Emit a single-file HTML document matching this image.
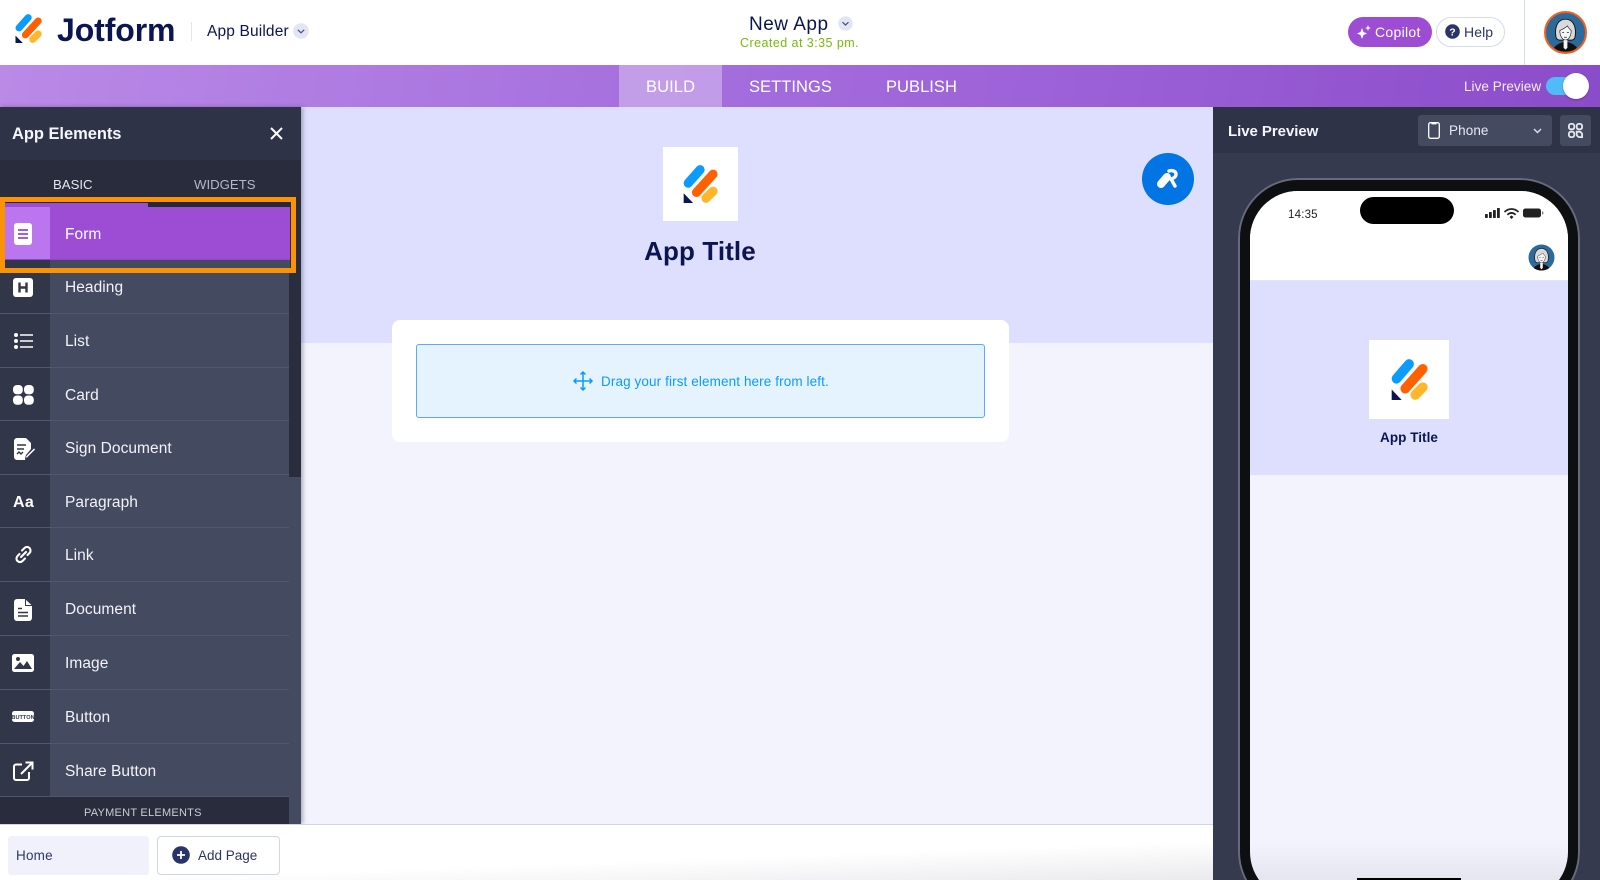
<!DOCTYPE html>
<html><head><meta charset="utf-8"><title>Jotform App Builder</title>
<style>
*{box-sizing:border-box}
html,body{margin:0;padding:0;width:1600px;height:880px;overflow:hidden;background:#fff;font-family:"Liberation Sans",sans-serif}
#w{position:relative;width:1600px;height:880px;overflow:hidden}
.a{position:absolute}
.t{position:absolute;white-space:nowrap;line-height:1}
svg{position:absolute;overflow:visible}
.row{position:absolute;left:0;width:289px;height:54px;background:#444a60;border-bottom:1.5px solid #51576f}
.row .ic{position:absolute;left:0;top:0;width:50px;height:100%;background:#323649}
.row .lb{position:absolute;left:65px;top:19px;font-size:15.5px;line-height:1;color:#f2f3f8;letter-spacing:.06px;white-space:nowrap}
.row svg{left:11px;top:12px}
</style></head><body><div id="w">
<svg width="0" height="0" style="position:absolute"><defs>
<symbol id="jl" viewBox="15 14 27 29" preserveAspectRatio="none">
<path d="M19 27.900 28.200 17.600" stroke="#0a9bff" stroke-width="7" stroke-linecap="round" fill="none"/>
<path d="M25.400 34.900 38.200 21" stroke="#ff6100" stroke-width="7" stroke-linecap="round" fill="none"/>
<path d="M32.700 39.400 38.200 34" stroke="#ffb629" stroke-width="7" stroke-linecap="round" fill="none"/>
<path d="M15.500 35.600 22.800 43H15.500z" fill="#0a1551"/>
</symbol>
<symbol id="av" viewBox="0 0 40 40">
<circle cx="20" cy="20" r="20" fill="#2c6a9c"/>
<path d="M10 25C8 14 12 6 20 6s12 8 10 19c-1 3-3 3-4 3H14c-1 0-3 0-4-3z" fill="#d9d9d9" stroke="#111" stroke-width="1"/>
<path d="M14 18c2-1 6-3 8-5 1 2 3 4 4 5 0 6-3 10-6 10s-6-4-6-10z" fill="#f4f4f4" stroke="#222" stroke-width=".7"/>
<path d="M16.500 20h2M21.500 20h2M18.500 25h3" stroke="#222" stroke-width=".8"/>
<path d="M8 36c3-4 7-5 10-6h4c3 1 7 2 10 6-3 3-8 4-12 4s-9-1-12-4z" fill="#111"/>
<path d="M18 28h4v8l-2 2-2-2z" fill="#f4f4f4"/>
</symbol>
</defs></svg>

<!-- top header -->
<div class="a" style="left:0;top:0;width:1600px;height:65px;background:#fff"></div>
<svg style="left:15px;top:14px" width="27" height="29"><use href="#jl" width="27" height="29"/></svg>
<div class="t" style="left:57px;top:14px;font-size:32px;font-weight:700;color:#0a1551;letter-spacing:-.1px">Jotform</div>
<div class="a" style="left:190.500px;top:22px;width:1px;height:19px;background:#e3e5f2"></div>
<div class="t" style="left:207px;top:24px;font-size:15.500px;color:#0a1551;letter-spacing:.15px">App Builder</div>
<svg style="left:293px;top:23px" width="16" height="16"><circle cx="8" cy="8" r="7.800" fill="#e3e5f5"/><path d="M4.800 6.800 8 9.800l3.200-3" fill="none" stroke="#46507d" stroke-width="1.200"/></svg>
<div class="t" style="left:749px;top:15px;font-size:19px;color:#0a1551;letter-spacing:.5px">New App</div>
<svg style="left:838px;top:16px" width="15" height="15"><circle cx="7.500" cy="7.500" r="7.300" fill="#e3e5f5"/><path d="M4.500 6.200 7.500 9l3-2.800" fill="none" stroke="#46507d" stroke-width="1.200"/></svg>
<div class="t" style="left:740px;top:37px;font-size:12.500px;color:#78bb07;letter-spacing:.45px">Created at 3:35 pm.</div>

<div class="a" style="left:1348px;top:17px;width:84px;height:30px;border-radius:15px;background:#9c4dd3"></div>
<svg style="left:1356px;top:25px" width="15" height="15" viewBox="0 0 15 15" fill="#fff"><path d="M6 3 7.500 7 11 8.500 7.500 10 6 14 4.500 10 1 8.500 4.500 7z"/><path d="M12 0 12.800 2.200 15 3l-2.200.8L12 6l-.8-2.200L9 3l2.200-.8z"/></svg>
<div class="t" style="left:1375px;top:25px;font-size:14px;color:#fff;letter-spacing:.3px">Copilot</div>
<div class="a" style="left:1436px;top:17px;width:69px;height:30px;border-radius:15px;background:#fff;border:1px solid #d6d9f2"></div>
<svg style="left:1445px;top:24px" width="15" height="15"><circle cx="7.500" cy="7.500" r="7.300" fill="#2b3467"/><text x="7.500" y="11.300" font-family="Liberation Sans" font-size="10.500" font-weight="700" text-anchor="middle" fill="#fff">?</text></svg>
<div class="t" style="left:1464px;top:25px;font-size:14px;color:#2b3467;letter-spacing:.1px">Help</div>
<div class="a" style="left:1524px;top:0;width:1px;height:65px;background:#d9dcf3"></div>
<svg style="left:1544px;top:11px" width="43" height="43" viewBox="0 0 43 43"><circle cx="21.500" cy="21.500" r="20.500" fill="#2c6a9c" stroke="#f2601c" stroke-width="2"/><use href="#av" x="2.500" y="2.500" width="38" height="38"/></svg>

<!-- purple bar -->
<div class="a" style="left:0;top:65px;width:1600px;height:42px;background:linear-gradient(100deg,#b98ae6 0%,#a873df 35%,#9a5fd6 70%,#8b4cc9 100%)"></div>
<div class="a" style="left:619px;top:65px;width:103px;height:42px;background:rgba(255,255,255,.32)"></div>
<div class="t" style="left:646px;top:79px;font-size:16.500px;color:#fff;letter-spacing:.1px">BUILD</div>
<div class="t" style="left:749px;top:79px;font-size:16.500px;color:#fff;letter-spacing:.05px">SETTINGS</div>
<div class="t" style="left:886px;top:79px;font-size:16.500px;color:#fff;letter-spacing:.05px">PUBLISH</div>
<div class="t" style="left:1464px;top:80px;font-size:13.500px;color:#f4ecfb;letter-spacing:.05px">Live Preview</div>
<div class="a" style="left:1546px;top:77px;width:40px;height:18px;border-radius:9px;background:#4fbcf7"></div>
<div class="a" style="left:1563px;top:73px;width:26px;height:26px;border-radius:50%;background:#fff;box-shadow:0 1px 2px rgba(0,0,0,.25)"></div>

<!-- center -->
<div class="a" style="left:301px;top:107px;width:912px;height:236px;background:#dedffe"></div>
<div class="a" style="left:301px;top:343px;width:912px;height:482px;background:#f3f3fe"></div>

<!-- sidebar -->
<div class="a" style="left:0;top:107px;width:301px;height:717px;background:#444a60;box-shadow:2px 0 4px rgba(40,44,64,.35)"></div>
<div class="a" style="left:0;top:107px;width:301px;height:53px;background:#2f3347"></div>
<div class="t" style="left:12px;top:126px;font-size:16.500px;font-weight:700;color:#f6f7fb;letter-spacing:-.05px">App Elements</div>
<svg style="left:270px;top:127px" width="13" height="13"><path d="M1 1 12 12M12 1 1 12" stroke="#fff" stroke-width="2"/></svg>
<div class="a" style="left:0;top:160px;width:301px;height:42px;background:#292c3c"></div>
<div class="t" style="left:53px;top:178px;font-size:13.200px;color:#e6e7ee">BASIC</div>
<div class="t" style="left:194px;top:178px;font-size:13.200px;color:#b5b8c6">WIDGETS</div>
<div class="a" style="left:289px;top:202px;width:12px;height:275px;background:#2a2d3e"></div>

<div class="a" style="left:5px;top:202px;width:285px;height:67px;background:#444a60"></div>
<div class="a" style="left:5px;top:260px;width:45px;height:9px;background:#323649"></div>
<div class="a" style="left:5px;top:202px;width:285px;height:5px;background:#232a36"></div>
<div class="a" style="left:5px;top:203px;width:143px;height:4px;background:#9c4dd3"></div>
<div class="a" style="left:5px;top:207px;width:285px;height:53px;background:#9c4dd3;border-bottom:1px solid #8b49bd"></div>
<div class="a" style="left:5px;top:207px;width:45px;height:52px;background:#bb76ef"></div>
<svg style="left:14px;top:223px" width="18" height="22"><rect width="18" height="22" rx="3" fill="#fff"/><path d="M4 7h10M4 11h10M4 15h10" stroke="#a65bdd" stroke-width="2"/></svg>
<div class="t" style="left:65px;top:227px;font-size:15.500px;color:#fff;letter-spacing:.06px">Form</div>

<div class="row" style="top:260px;height:54px"><div class="ic"></div><svg style="top:18px;left:13px" width="20" height="20"><rect x="0" width="20" height="19" rx="3" fill="#fff"/><path d="M6.500 4.500v10M13.500 4.500v10M6.500 9.500h7" stroke="#323649" stroke-width="2.400" fill="none"/></svg><div class="lb" style="top:20px">Heading</div></div>
<div class="row" style="top:314px;height:53.500px"><div class="ic"></div><svg style="top:19px;left:14px" width="19" height="16"><g fill="#fff"><circle cx="2" cy="2" r="2"/><circle cx="2" cy="8" r="2"/><circle cx="2" cy="14" r="2"/></g><path d="M6 2h13M6 8h13M6 14h13" stroke="#fff" stroke-width="1.600"/></svg><div class="lb" style="top:20px">List</div></div>
<div class="row" style="top:367.500px;height:53.500px"><div class="ic"></div><svg style="top:17px;left:13px" width="21" height="20" fill="#fff"><rect width="9.800" height="9.300" rx="4"/><rect x="11" width="9.800" height="9.300" rx="4"/><rect y="10.500" width="9.800" height="9.300" rx="4"/><rect x="11" y="10.500" width="9.800" height="9.300" rx="4"/></svg><div class="lb" style="top:20px">Card</div></div>
<div class="row" style="top:421px;height:53.500px"><div class="ic"></div><svg style="top:17px;left:14px" width="22" height="22"><path d="M3 0h9l5 5v6l-5 6-1 5H3a3 3 0 0 1-3-3V3a3 3 0 0 1 3-3z" fill="#fff"/><path d="M3 7h9M3 11h7M3 16l2-2 2 2 2-2" stroke="#323649" stroke-width="1.400" fill="none"/><path d="M12 18 20 10l1.500 1.500-8 8-2 .5z" fill="#fff" stroke="#323649" stroke-width=".6"/></svg><div class="lb" style="top:20px">Sign Document</div></div>
<div class="row" style="top:474.500px;height:53.500px"><div class="ic"></div><div class="t" style="left:13px;top:20px;font-size:16px;font-weight:700;color:#fff;letter-spacing:.3px">Aa</div><div class="lb" style="top:20px">Paragraph</div></div>
<div class="row" style="top:528px;height:54px"><div class="ic"></div><svg style="top:17px;left:14px" width="19" height="19" viewBox="0 0 19 19" fill="none" stroke="#fff" stroke-width="2.100" stroke-linecap="round"><path d="M8 5.500 10.500 3a3.500 3.500 0 0 1 5 5L13.500 10"/><path d="M11 13.500 8.500 16a3.500 3.500 0 0 1-5-5L5.500 9"/><path d="M7 12 12 7"/></svg><div class="lb" style="top:20px">Link</div></div>
<div class="row" style="top:582px;height:54px"><div class="ic"></div><svg style="top:17px;left:14px" width="18" height="22"><path d="M3 0h8l7 6.500V19a3 3 0 0 1-3 3H3a3 3 0 0 1-3-3V3a3 3 0 0 1 3-3z" fill="#fff"/><path d="M11.500 0v6.500H18" stroke="#323649" stroke-width="1" fill="none"/><path d="M4 9.500h4M4 13.500h10M4 17h10" stroke="#323649" stroke-width="1.500"/></svg><div class="lb" style="top:20px">Document</div></div>
<div class="row" style="top:636px;height:54px"><div class="ic"></div><svg style="top:18px;left:12px" width="22" height="18"><rect width="22" height="18" rx="2.500" fill="#fff"/><circle cx="6" cy="5" r="2" fill="#323649"/><path d="M2 15 8 8l3.500 4L15 7l5 8z" fill="#323649"/></svg><div class="lb" style="top:20px">Image</div></div>
<div class="row" style="top:690px;height:53.500px"><div class="ic"></div><svg style="top:21px;left:12px" width="22" height="11"><rect width="22" height="11" rx="2.500" fill="#fff"/><text x="11" y="7.800" font-size="5.600" font-weight="700" font-family="Liberation Sans" text-anchor="middle" fill="#323649">BUTTON</text></svg><div class="lb" style="top:20px">Button</div></div>
<div class="row" style="top:743.500px;height:53.500px"><div class="ic"></div><svg style="top:17px;left:13px" width="21" height="21" fill="none" stroke="#fff" stroke-width="2"><path d="M9 3.500H3A2 2 0 0 0 1 5.500V17a2 2 0 0 0 2 2h11a2 2 0 0 0 2-2v-6"/><path d="M8 13 19 2M12.500 1.500H19.500V8.500"/></svg><div class="lb" style="top:20px">Share Button</div></div>
<div class="a" style="left:0;top:797px;width:289px;height:27px;background:#292c3c"></div>
<div class="t" style="left:84px;top:807.500px;font-size:11px;color:#c9cbd6;letter-spacing:.25px">PAYMENT ELEMENTS</div>

<!-- orange highlight -->
<div class="a" style="left:0;top:197px;width:296px;height:76px;border:5px solid #fa9405"></div>

<!-- center content -->
<div class="a" style="left:663px;top:147px;width:75px;height:74px;background:#fff"></div>
<svg style="left:683px;top:165px" width="35" height="38"><use href="#jl" width="35" height="38"/></svg>
<div class="t" style="left:0;top:238px;width:1400px;text-align:center;font-size:26px;font-weight:700;color:#0a1551;letter-spacing:.1px">App Title</div>
<div class="a" style="left:392px;top:320px;width:617px;height:122px;background:#fff;border-radius:8px"></div>
<div class="a" style="left:415.500px;top:344px;width:569.500px;height:74px;background:#e5f3ff;border:1px solid #5ca9f4;border-radius:3px"></div>
<svg style="left:573px;top:371px" width="20" height="20" viewBox="0 0 20 20" fill="none" stroke="#0a9bff" stroke-width="1.500"><path d="M10 1v18M1 10h18M7.500 3.500 10 1l2.500 2.500M7.500 16.500 10 19l2.500-2.500M3.500 7.500 1 10l2.500 2.500M16.500 7.500 19 10l-2.500 2.500"/></svg>
<div class="t" style="left:601px;top:375px;font-size:13.500px;color:#0a9bff;letter-spacing:.11px">Drag your first element here from left.</div>
<div class="a" style="left:1142px;top:153px;width:52px;height:52px;border-radius:50%;background:#0075e3"></div>
<svg style="left:1156px;top:166px" width="26" height="26" viewBox="0 0 26 26"><path d="M5 18 11 11" stroke="#fff" stroke-width="8" stroke-linecap="round"/><path d="M13 5c3-1 7 0 7 3s-2 4-5 5l4 7" fill="none" stroke="#fff" stroke-width="3.400" stroke-linecap="round"/></svg>

<!-- bottom bar -->
<div class="a" style="left:0;top:824px;width:1213px;height:56px;background:linear-gradient(178deg,#fff 60%,#e6e6ea 108%);border-top:1px solid #d3d5e0"></div>
<div class="a" style="left:8px;top:836px;width:141px;height:39px;border-radius:3px;background:#f1f1fb"></div>
<div class="t" style="left:16px;top:849px;font-size:13.500px;color:#2f376b;letter-spacing:.2px">Home</div>
<div class="a" style="left:157px;top:836px;width:123px;height:39px;border:1px solid #d0d5ee;border-radius:4px;background:#fff"></div>
<svg style="left:172px;top:846px" width="18" height="18"><circle cx="9" cy="9" r="8.800" fill="#2b3467"/><path d="M9 5v8M5 9h8" stroke="#fff" stroke-width="1.800"/></svg>
<div class="t" style="left:198px;top:849px;font-size:13.500px;color:#2b3467;letter-spacing:0">Add Page</div>

<!-- right panel -->
<div class="a" style="left:1213px;top:107px;width:387px;height:773px;background:#353a4f"></div>
<div class="a" style="left:1213px;top:107px;width:387px;height:46px;background:#2f3347"></div>
<div class="t" style="left:1228px;top:124px;font-size:15px;font-weight:700;color:#f4f5f9;letter-spacing:-.05px">Live Preview</div>
<div class="a" style="left:1418px;top:115px;width:134px;height:31px;border-radius:3px;background:#444a60"></div>
<svg style="left:1428px;top:122px" width="12" height="17" fill="none" stroke="#fff" stroke-width="1.300"><rect x=".7" y=".7" width="10.600" height="15.600" rx="1.800"/><path d="M3.500 1.500h5" stroke-width="1.800"/></svg>
<div class="t" style="left:1449px;top:124px;font-size:13.500px;color:#e8eaf2;letter-spacing:.1px">Phone</div>
<svg style="left:1533px;top:128px" width="9" height="6"><path d="M1 1l3.500 3.500L8 1" fill="none" stroke="#dfe1ea" stroke-width="1.400"/></svg>
<div class="a" style="left:1560px;top:115px;width:31px;height:31px;border-radius:3px;background:#444a60"></div>
<svg style="left:1568px;top:123px" width="15" height="15" fill="none" stroke="#e6e8ef" stroke-width="1.800"><rect x=".9" y=".9" width="5.400" height="5.400" rx="2"/><rect x="8.700" y=".9" width="5.400" height="5.400" rx="2"/><rect x=".9" y="8.700" width="5.400" height="5.400" rx="2"/><path d="M8.700 8.700h2.200a3 3 0 0 1 3.200 3.200v2.200h-2.200a3 3 0 0 1-3.200-3.200z"/></svg>

<!-- phone -->
<div class="a" style="left:1238px;top:178px;width:342px;height:734px;border-radius:60px;background:#0e0f10;box-shadow:inset 0 0 0 2px #666b7c"></div>
<div class="a" style="left:1250px;top:191px;width:318px;height:709px;border-radius:48px;background:linear-gradient(#f3f3fe 92%,#dedee8 100%);overflow:hidden">
  <div class="a" style="left:0;top:0;width:318px;height:90px;background:#fff;border-bottom:1px solid #e4e4f2"></div>
  <div class="a" style="left:0;top:90px;width:318px;height:194px;background:#dedffe"></div>
</div>
<div class="a" style="left:1360px;top:197px;width:94px;height:27px;border-radius:14px;background:#000"></div>
<div class="t" style="left:1288px;top:210px;font-size:11.500px;color:#222;letter-spacing:.2px">14:35</div>
<svg style="left:1485px;top:207px" width="62" height="14"><g fill="#222"><rect x="0" y="7" width="2.800" height="4" rx=".6"/><rect x="4" y="5" width="2.800" height="6" rx=".6"/><rect x="8" y="3" width="2.800" height="8" rx=".6"/><rect x="12" y="1" width="2.800" height="10" rx=".6"/><rect x="38" y="1.500" width="18" height="9" rx="2.400"/><rect x="57" y="4.500" width="1.300" height="3" rx=".6" fill="#777"/></g><path d="M19.500 5c4.300-4 9.700-4 14 0M22.300 7.800c2.700-2.400 5.700-2.400 8.400 0" fill="none" stroke="#222" stroke-width="1.700"/><path d="M24.500 10 26.500 8.400 28.500 10 26.500 12z" fill="#222"/></svg>
<svg style="left:1527px;top:243px" width="29" height="29" viewBox="0 0 29 29"><circle cx="14.500" cy="14.500" r="14.500" fill="#fff"/><use href="#av" x="1.500" y="1.500" width="26" height="26"/></svg>
<div class="a" style="left:1369px;top:340px;width:80px;height:79px;background:#fff"></div>
<svg style="left:1391px;top:359px" width="37" height="41"><use href="#jl" width="37" height="41"/></svg>
<div class="t" style="left:1309px;top:431px;width:200px;text-align:center;font-size:13.500px;font-weight:700;color:#0a1551;letter-spacing:.05px">App Title</div>
<div class="a" style="left:1357px;top:878px;width:104px;height:2px;background:#000"></div>
</div></body></html>
